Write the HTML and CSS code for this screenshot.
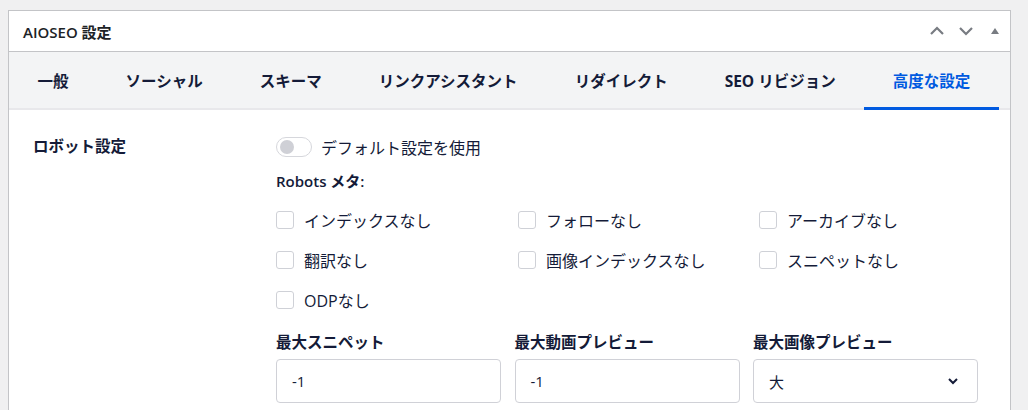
FILE: index.html
```html
<!DOCTYPE html>
<html lang="ja">
<head>
    <meta charset="UTF-8">
    <title>AIOSEO 設定</title>
    <link rel="stylesheet" href="styles.css">
</head>
<body>
    <div class="postbox">
        <div class="postbox-header">
            <h2 class="postbox-title">AIOSEO 設定</h2>
            <div class="handle-actions">
                <span class="handle-btn">
                    <svg width="16" height="16" viewBox="0 0 16 16"><polyline points="2,11 8,5 14,11" fill="none" stroke="#787c82" stroke-width="2.2"/></svg>
                </span>
                <span class="handle-btn">
                    <svg width="16" height="16" viewBox="0 0 16 16"><polyline points="2,5 8,11 14,5" fill="none" stroke="#787c82" stroke-width="2.2"/></svg>
                </span>
                <span class="handle-btn">
                    <svg width="10" height="10" viewBox="0 0 10 10"><polygon points="1,8 5,2 9,8" fill="#787c82"/></svg>
                </span>
            </div>
        </div>

        <div class="tabs">
            <div class="tab">一般</div>
            <div class="tab">ソーシャル</div>
            <div class="tab">スキーマ</div>
            <div class="tab">リンクアシスタント</div>
            <div class="tab">リダイレクト</div>
            <div class="tab">SEO リビジョン</div>
            <div class="tab tab--active">高度な設定</div>
        </div>

        <div class="settings-row">
            <div class="settings-name">ロボット設定</div>
            <div class="settings-content">
                <div class="toggle-row">
                    <span class="toggle"><span class="toggle__knob"></span></span>
                    <span>デフォルト設定を使用</span>
                </div>
                <div class="robots-label">Robots メタ:</div>
                <div class="checks">
                    <label class="check"><span class="check__box"></span>インデックスなし</label>
                    <label class="check"><span class="check__box"></span>フォローなし</label>
                    <label class="check"><span class="check__box"></span>アーカイブなし</label>
                    <label class="check"><span class="check__box"></span>翻訳なし</label>
                    <label class="check"><span class="check__box"></span>画像インデックスなし</label>
                    <label class="check"><span class="check__box"></span>スニペットなし</label>
                    <label class="check"><span class="check__box"></span>ODPなし</label>
                </div>
                <div class="fields">
                    <div class="field">
                        <div class="field__label">最大スニペット</div>
                        <div class="field__input">-1</div>
                    </div>
                    <div class="field">
                        <div class="field__label">最大動画プレビュー</div>
                        <div class="field__input">-1</div>
                    </div>
                    <div class="field">
                        <div class="field__label">最大画像プレビュー</div>
                        <div class="field__input field__select">
                            <span>大</span>
                            <svg width="12" height="12" viewBox="0 0 12 12"><polyline points="2,4 6,8 10,4" fill="none" stroke="#141b38" stroke-width="2"/></svg>
                        </div>
                    </div>
                </div>
            </div>
        </div>
    </div>
</body>
</html>
```

FILE: styles.css
```css
*{
    padding: 0;
    margin: 0;
    box-sizing: border-box;
}
body{
    background-color: #f0f0f1;
    padding: 10px 17px 0 8px;
    font-family: "Open Sans", "Noto Sans CJK JP", sans-serif;
    color: #141b38;
}
.postbox{
    background-color: #fff;
    border: 1px solid #c3c4c7;
    height: 420px;
}
.postbox-header{
    height: 41px;
    border-bottom: 1px solid #c3c4c7;
    display: flex;
    align-items: center;
    justify-content: space-between;
}
.postbox-title{
    font-size: 15px;
    font-weight: 600;
    padding-left: 14px;
    color: #1d2327;
}
.handle-actions{
    display: flex;
    padding-right: 1px;
}
.handle-btn{
    width: 29px;
    height: 36px;
    display: flex;
    align-items: center;
    justify-content: center;
}

.tabs{
    display: flex;
    height: 58px;
    background-color: #f3f4f5;
    border-bottom: 2px solid #e8e8eb;
}
.tab{
    padding: 0 28.5px;
    font-size: 15.5px;
    font-weight: 700;
    display: flex;
    align-items: center;
    position: relative;
    white-space: nowrap;
}
.tab--active{
    color: #005ae0;
}
.tab--active::after{
    content: "";
    position: absolute;
    left: 0;
    right: 0;
    bottom: -2px;
    height: 3px;
    background-color: #005ae0;
}

.settings-row{
    display: flex;
    padding: 24px 32px 0 24px;
}
.settings-name{
    width: 243px;
    flex-shrink: 0;
    font-size: 15.5px;
    font-weight: 700;
    line-height: 24px;
}
.settings-content{
    flex: 1;
    min-width: 0;
}
.toggle-row{
    display: flex;
    align-items: center;
    gap: 9px;
    height: 24px;
    margin-top: 1px;
    font-size: 16px;
}
.toggle{
    width: 36px;
    height: 20px;
    border: 1px solid #d6d7dc;
    border-radius: 10px;
    display: flex;
    align-items: center;
    padding-left: 3px;
}
.toggle__knob{
    width: 14px;
    height: 14px;
    border-radius: 50%;
    background-color: #cfd0d6;
}
.robots-label{
    margin-top: 11px;
    font-size: 15px;
    font-weight: 600;
    line-height: 22px;
}
.checks{
    display: grid;
    grid-template-columns: 242px 241px 1fr;
    grid-auto-rows: 40px;
    margin-top: 8px;
}
.check{
    display: flex;
    align-items: center;
    gap: 10px;
    font-size: 16px;
}
.check__box{
    width: 18px;
    height: 18px;
    border: 1px solid #cfd1d7;
    border-radius: 3px;
    background-color: #fff;
}
.fields{
    display: grid;
    grid-template-columns: repeat(3, 225px);
    column-gap: 13.5px;
    margin-top: 10px;
}
.field__label{
    font-size: 15.5px;
    font-weight: 700;
    line-height: 24px;
}
.field__input{
    margin-top: 5px;
    height: 44px;
    border: 1px solid #d0d1d7;
    border-radius: 4px;
    display: flex;
    align-items: center;
    padding: 0 15px;
    font-size: 15px;
}
.field__select{
    justify-content: space-between;
    padding-right: 18px;
}
```
